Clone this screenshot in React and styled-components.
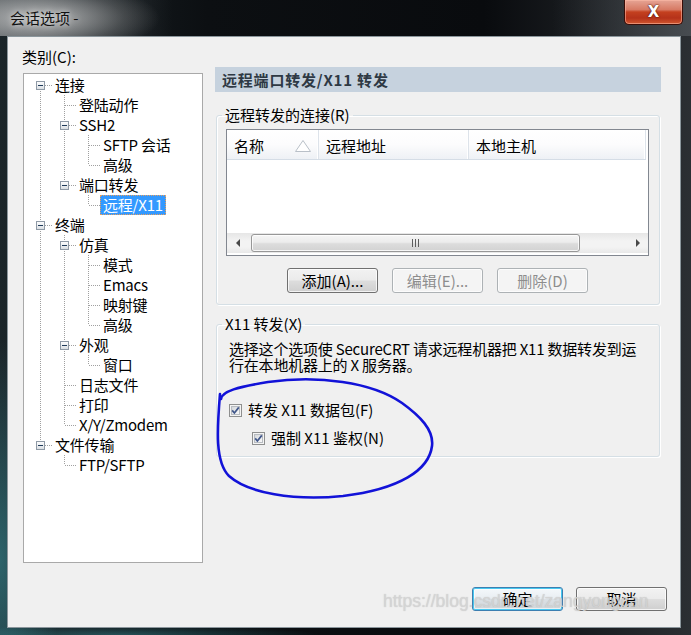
import React from 'react'
import styled, { createGlobalStyle, css } from 'styled-components'

const GlobalStyle = createGlobalStyle`
  html, body {
    margin: 0;
    padding: 0;
    background: #0b0e11;
  }
  body {
    font-family: "Noto Sans CJK SC", "Noto Sans", sans-serif;
    font-size: 15px;
    color: #000;
  }
`

const Window = styled.div`
  position: relative;
  width: 691px;
  height: 635px;
  box-sizing: border-box;
  padding: 0 10px 7px 7px;
  display: flex;
  flex-direction: column;
  overflow: hidden;
  background:
    radial-gradient(ellipse 60px 220px at 0px 560px, rgba(60, 150, 160, 0.55), transparent),
    radial-gradient(ellipse 200px 10px at 120px 635px, rgba(60, 150, 160, 0.45), transparent),
    linear-gradient(90deg, #1b2529 0%, #0c0f12 30%, #090b0e 70%, #2b2f33 100%);
`

const TitleBar = styled.div`
  height: 36px;
  flex: none;
  display: flex;
  align-items: flex-start;
  justify-content: space-between;
  margin: 0 -10px 0 -7px;
  padding-left: 10px;
  background:
    radial-gradient(ellipse 120px 36px at 40px 18px, rgba(205, 205, 205, 0.85), rgba(150, 150, 150, 0.3) 70%, transparent),
    linear-gradient(90deg, rgba(120, 125, 130, 0.6), transparent 25%, transparent 80%, rgba(90, 95, 100, 0.6));
`

const Title = styled.span`
  margin-top: 9px;
  line-height: 18px;
  font-size: 15px;
  color: #111;
  text-shadow: 0 0 6px rgba(255, 255, 255, 0.8);
`

const CloseButton = styled.div`
  width: 59px;
  height: 25px;
  margin-right: 8px;
  box-sizing: border-box;
  border: 1px solid #3b0d07;
  border-top: none;
  border-radius: 0 0 5px 5px;
  box-shadow: inset 0 0 0 1px rgba(255, 190, 170, 0.55);
  background: linear-gradient(180deg, #e6a595 0%, #d77a64 40%, #c4401f 50%, #b5321a 75%, #d1572f 100%);
  display: flex;
  align-items: center;
  justify-content: center;
  color: #fff;
  font-family: "DejaVu Sans", sans-serif;
  font-weight: bold;
  font-size: 15px;
  text-shadow: 0 0 2px #4a0f05, 0 0 1px #4a0f05;
`

const Client = styled.div`
  flex: 1;
  display: flex;
  flex-direction: column;
  background: #f0f0f0;
  border: 1px solid #8b969c;
`

const Body = styled.div`
  display: flex;
  align-items: flex-start;
`

const LeftCol = styled.div`
  padding: 10px 0 0 15px;
  display: flex;
  flex-direction: column;
`

const Label = styled.div`
  line-height: 20px;
  margin-bottom: 6px;
  margin-left: -1px;
`

const TreeBox = styled.div`
  width: 180px;
  height: 490px;
  box-sizing: border-box;
  border: 1px solid #a9a9a9;
  background: #fff;
  padding: 1px 0 0 4px;
`

const TreeRow = styled.div`
  display: flex;
  align-items: center;
  height: 20px;
`

const TreeText = styled.span`
  padding: 0 2px;
  line-height: 18px;
  white-space: nowrap;
  letter-spacing: -0.2px;
  border: 1px solid transparent;
  ${p => p.selected && css`
    background: #3399ff;
    color: #fff;
    border: 1px dotted #e8a060;
  `}
`

const RightCol = styled.div`
  width: 446px;
  margin-left: 12px;
  padding-top: 30px;
`

const SectionHeader = styled.div`
  height: 25px;
  background: #c6d2de;
  padding-left: 7px;
  line-height: 25px;
  font-weight: bold;
  letter-spacing: 0.8px;
  color: #2e3944;
`

const Group = styled.fieldset`
  margin: ${p => p.$top}px 1px 0 1px;
  padding: 0;
  border: 1px solid #d5dfe5;
  border-radius: 3px;
  box-shadow: inset 1px 1px 0 #fff, 1px 1px 0 #fff;
  min-width: 0;
`

const Legend = styled.legend`
  margin-left: 5px;
  padding: 0 3px;
  line-height: 16px;
  font-size: 15px;
`

const GroupBody = styled.div`
  padding: ${p => p.$pad};
`

const ListView = styled.div`
  height: 127px;
  box-sizing: border-box;
  border: 1px solid #828790;
  background: #fff;
  display: flex;
  flex-direction: column;
`

const ListHeader = styled.div`
  display: flex;
  height: 30px;
  flex: none;
  box-sizing: border-box;
  background: linear-gradient(180deg, #ffffff 0%, #fcfcfd 50%, #eef1f5 100%);
  border-bottom: 1px solid #d5dde6;
  margin-right: 2px;
`

const HeaderCell = styled.div`
  display: flex;
  align-items: center;
  justify-content: space-between;
  width: ${p => p.$w ? `${p.$w}px` : 'auto'};
  flex: ${p => p.$w ? 'none' : '1'};
  box-sizing: border-box;
  padding: 2px 6px 0 7px;
  border-right: 1px solid #dde3ea;
  box-shadow: inset -1px 0 0 #ffffff;
`

const ListBody = styled.div`
  flex: 1;
`

const HScroll = styled.div`
  height: 20px;
  margin-bottom: 2px;
  display: flex;
  align-items: stretch;
  background: linear-gradient(180deg, #e6e6e6, #f3f3f3 40%, #f3f3f3 70%, #e8e8e8);
`

const ScrollArrow = styled.div`
  width: 20px;
  flex: none;
  display: flex;
  align-items: center;
  justify-content: center;
`

const ScrollThumb = styled.div`
  width: 329px;
  margin: 1px 0 1px 4px;
  box-sizing: border-box;
  border: 1px solid #979797;
  border-radius: 3px;
  background: linear-gradient(180deg, #f5f5f5 0%, #ececec 45%, #dcdcdc 55%, #d2d2d2 100%);
  box-shadow: inset 0 0 0 1px rgba(255, 255, 255, 0.8);
  display: flex;
  align-items: center;
  justify-content: center;
`

const ScrollTrack = styled.div`
  flex: 1;
`

const ButtonRow = styled.div`
  display: flex;
  justify-content: ${p => p.$end ? 'flex-end' : 'center'};
  gap: ${p => p.$gap}px;
  margin-top: ${p => p.$top || 0}px;
`

const Button = styled.button`
  width: 91px;
  height: ${p => p.$h || 25}px;
  padding: 0;
  font-family: inherit;
  font-size: 15px;
  line-height: 20px;
  color: #000;
  border: 1px solid #707070;
  border-radius: 3px;
  background: linear-gradient(180deg, #f2f2f2 0%, #ebebeb 48%, #dddddd 52%, #cfcfcf 100%);
  box-shadow: inset 0 0 0 1px rgba(255, 255, 255, 0.75);
  ${p => p.disabled && css`
    color: #8d8d8d;
    border-color: #adb2b5;
    background: #f4f4f4;
  `}
  ${p => p.$default && css`
    border-color: #3c7fb1;
    box-shadow: inset 0 0 0 1px #48c8f0, inset 0 0 0 2px rgba(255, 255, 255, 0.6);
    background: linear-gradient(180deg, #f4f8fb 0%, #e9eef2 48%, #dce1e5 52%, #d0d5d9 100%);
  `}
`

const Description = styled.div`
  line-height: 16px;
  white-space: nowrap;
  letter-spacing: -0.2px;
`

const CheckRow = styled.label`
  display: flex;
  align-items: center;
  height: 20px;
  margin-left: ${p => p.$indent || 0}px;
  margin-top: ${p => p.$top || 0}px;
  gap: 6px;
`

const CheckText = styled.span`
  line-height: 20px;
`

const Footer = styled.div`
  margin-top: auto;
  padding: 0 13px 16px 0;
`

const Annotation = styled.svg`
  position: absolute;
  left: 0;
  top: 0;
  pointer-events: none;
`

const Watermark = styled.div`
  position: absolute;
  left: 383px;
  top: 590px;
  font-family: "Liberation Sans", Arial, sans-serif;
  font-size: 17.5px;
  line-height: 22px;
  color: rgba(214, 214, 214, 0.85);
  text-shadow: 0 0 1px rgba(120, 120, 120, 0.35);
  white-space: nowrap;
  pointer-events: none;
`

const treeItems = [
  { label: '连接', level: 0, open: true },
  { label: '登陆动作', level: 1 },
  { label: 'SSH2', level: 1, open: true },
  { label: 'SFTP 会话', level: 2 },
  { label: '高级', level: 2 },
  { label: '端口转发', level: 1, open: true },
  { label: '远程/X11', level: 2, selected: true },
  { label: '终端', level: 0, open: true },
  { label: '仿真', level: 1, open: true },
  { label: '模式', level: 2 },
  { label: 'Emacs', level: 2 },
  { label: '映射键', level: 2 },
  { label: '高级', level: 2 },
  { label: '外观', level: 1, open: true },
  { label: '窗口', level: 2 },
  { label: '日志文件', level: 1 },
  { label: '打印', level: 1 },
  { label: 'X/Y/Zmodem', level: 1 },
  { label: '文件传输', level: 0, open: true },
  { label: 'FTP/SFTP', level: 1 },
]

// does the row have a later sibling on its own level
const hasNext = (i) => {
  const lv = treeItems[i].level
  for (let j = i + 1; j < treeItems.length; j++) {
    if (treeItems[j].level < lv) return false
    if (treeItems[j].level === lv) return true
  }
  return false
}

const ancestorAt = (i, lv) => {
  for (let j = i - 1; j >= 0; j--) {
    if (treeItems[j].level === lv) return j
  }
  return -1
}

const GuideCell = ({ top, bottom, branch, expander }) => (
  <svg width="24" height="20" style={{ flex: 'none', display: 'block' }} shapeRendering="crispEdges">
    {top && <line x1="12.5" y1="0" x2="12.5" y2="10" stroke="#a0a0a0" strokeDasharray="1 1" />}
    {bottom && <line x1="12.5" y1="10" x2="12.5" y2="20" stroke="#a0a0a0" strokeDasharray="1 1" />}
    {branch && <line x1="12.5" y1="10.5" x2="24" y2="10.5" stroke="#a0a0a0" strokeDasharray="1 1" />}
    {expander && (
      <>
        <defs>
          <linearGradient id="expg" x1="0" y1="0" x2="0" y2="1">
            <stop offset="0" stopColor="#ffffff" />
            <stop offset="1" stopColor="#d8dde2" />
          </linearGradient>
        </defs>
        <rect x="8.5" y="6.5" width="8" height="8" fill="url(#expg)" stroke="#8f9aa6" />
        <line x1="10" y1="10.5" x2="15" y2="10.5" stroke="#1f3b5a" />
      </>
    )}
  </svg>
)

const TreeItem = ({ item, index }) => {
  const cells = []
  for (let lv = 0; lv < item.level; lv++) {
    const a = ancestorAt(index, lv)
    const cont = a >= 0 && hasNext(a)
    cells.push(<GuideCell key={lv} top={cont} bottom={cont} />)
  }
  cells.push(
    <GuideCell
      key="own"
      top={index !== 0}
      bottom={hasNext(index)}
      branch
      expander={item.open}
    />
  )
  return (
    <TreeRow>
      {cells}
      <TreeText selected={item.selected}>{item.label}</TreeText>
    </TreeRow>
  )
}

const SortArrow = () => (
  <svg width="18" height="14" viewBox="0 0 18 14">
    <polygon points="1.5,12.5 9,1.5 16.5,12.5" fill="#fff" stroke="#b9c0c8" />
  </svg>
)

const ArrowIcon = ({ dir }) => (
  <svg width="5" height="8" viewBox="0 0 5 8">
    {dir === 'left'
      ? <polygon points="5,0 5,8 1,4" fill="#4a4a4a" />
      : <polygon points="0,0 0,8 4,4" fill="#4a4a4a" />}
  </svg>
)

const Grip = () => (
  <svg width="8" height="8" viewBox="0 0 8 8" shapeRendering="crispEdges">
    <line x1="0.5" y1="0" x2="0.5" y2="8" stroke="#5d5d5d" />
    <line x1="3.5" y1="0" x2="3.5" y2="8" stroke="#5d5d5d" />
    <line x1="6.5" y1="0" x2="6.5" y2="8" stroke="#5d5d5d" />
  </svg>
)

const CheckBox = () => (
  <svg width="13" height="13" viewBox="0 0 13 13" style={{ flex: 'none' }}>
    <defs>
      <linearGradient id="cbg" x1="0" y1="0" x2="1" y2="1">
        <stop offset="0" stopColor="#d3d6da" />
        <stop offset="1" stopColor="#fbfbfb" />
      </linearGradient>
    </defs>
    <rect x="0.5" y="0.5" width="12" height="12" fill="#f4f4f4" stroke="#8e8f8f" />
    <rect x="2.5" y="2.5" width="8" height="8" fill="url(#cbg)" stroke="#b8bcc1" />
    <polyline points="3.2,6.4 5.4,9 9.8,3.4" fill="none" stroke="#41578a" strokeWidth="1.7" />
  </svg>
)

const App = () => {
  return (
    <>
      <GlobalStyle />
      <Window>
        <TitleBar>
          <Title>会话选项 -</Title>
          <CloseButton>X</CloseButton>
        </TitleBar>
        <Client>
          <Body>
            <LeftCol>
              <Label>类别(C):</Label>
              <TreeBox>
                {treeItems.map((item, i) => (
                  <TreeItem key={i} item={item} index={i} />
                ))}
              </TreeBox>
            </LeftCol>
            <RightCol>
              <SectionHeader>远程端口转发/X11 转发</SectionHeader>
              <Group $top={15}>
                <Legend>远程转发的连接(R)</Legend>
                <GroupBody $pad="6px 10px 11px 9px">
                  <ListView>
                    <ListHeader>
                      <HeaderCell $w={92}>名称<SortArrow /></HeaderCell>
                      <HeaderCell $w={150}>远程地址</HeaderCell>
                      <HeaderCell>本地主机</HeaderCell>
                    </ListHeader>
                    <ListBody />
                    <HScroll>
                      <ScrollArrow><ArrowIcon dir="left" /></ScrollArrow>
                      <ScrollThumb><Grip /></ScrollThumb>
                      <ScrollTrack />
                      <ScrollArrow><ArrowIcon dir="right" /></ScrollArrow>
                    </HScroll>
                  </ListView>
                  <ButtonRow $gap={14} $top={12}>
                    <Button>添加(A)...</Button>
                    <Button disabled>编辑(E)...</Button>
                    <Button disabled>删除(D)</Button>
                  </ButtonRow>
                </GroupBody>
              </Group>
              <Group $top={11}>
                <Legend>X11 转发(X)</Legend>
                <GroupBody $pad="9px 8px 8px 12px">
                  <Description>
                    选择这个选项使 SecureCRT 请求远程机器把 X11 数据转发到运<br />
                    行在本地机器上的 X 服务器。
                  </Description>
                  <CheckRow $top={27}>
                    <CheckBox />
                    <CheckText>转发 X11 数据包(F)</CheckText>
                  </CheckRow>
                  <CheckRow $indent={23} $top={8}>
                    <CheckBox />
                    <CheckText>强制 X11 鉴权(N)</CheckText>
                  </CheckRow>
                </GroupBody>
              </Group>
            </RightCol>
          </Body>
          <Footer>
            <ButtonRow $end $gap={13}>
              <Button $default $h={24}>确定</Button>
              <Button $h={24}>取消</Button>
            </ButtonRow>
          </Footer>
        </Client>
        <Annotation width="691" height="635" viewBox="0 0 691 635">
          <path
            d="M 221 399 C 222 391, 238 387, 268 382 C 318 375, 372 382, 402 403 C 420 416, 434 430, 432 446 C 429 470, 400 489, 343 496 C 293 501, 248 493, 229 476 C 215 462, 217 430, 220 394"
            fill="none"
            stroke="#1212d8"
            strokeWidth="2.6"
            strokeLinecap="round"
          />
        </Annotation>
        <Watermark>https://blog.csdn.net/zangyongcan</Watermark>
      </Window>
    </>
  )
}

export default App
